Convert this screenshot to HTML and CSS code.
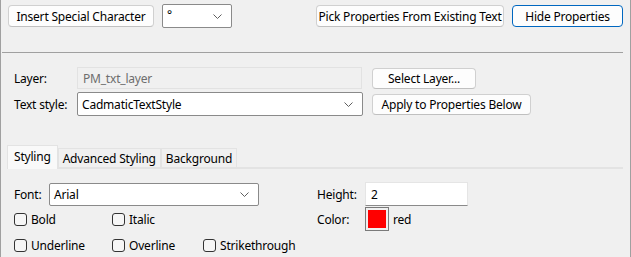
FILE: index.html
```html
<!DOCTYPE html>
<html lang="en">
<head>
    <meta charset="UTF-8">
    <title>Text Properties</title>
    <link rel="stylesheet" href="styles.css">
</head>
<body>
    <div class="window">
        <!-- Top toolbar -->
        <div class="toolbar">
            <button class="btn btn-insert">Insert Special Character</button>
            <div class="combo combo-char">
                <span class="combo-text">°</span>
                <svg class="chevron" width="9" height="5" viewBox="0 0 9 5"><path d="M0.5 0.5 L4.5 4.5 L8.5 0.5" fill="none" stroke="#5f5f5f" stroke-width="1"/></svg>
            </div>
            <div class="spacer"></div>
            <button class="btn btn-pick">Pick Properties From Existing Text</button>
            <button class="btn btn-hide">Hide Properties</button>
        </div>

        <div class="separator"></div>

        <!-- Layer and style -->
        <div class="layer-section">
            <div class="row">
                <div class="label">Layer:</div>
                <div class="textbox disabled layer-box">PM_txt_layer</div>
                <button class="btn btn-layer">Select Layer...</button>
            </div>
            <div class="row">
                <div class="label">Text style:</div>
                <div class="combo combo-style">
                    <span class="combo-text">CadmaticTextStyle</span>
                    <svg class="chevron" width="9" height="5" viewBox="0 0 9 5"><path d="M0.5 0.5 L4.5 4.5 L8.5 0.5" fill="none" stroke="#5f5f5f" stroke-width="1"/></svg>
                </div>
                <button class="btn btn-apply">Apply to Properties Below</button>
            </div>
        </div>

        <!-- Tabs -->
        <div class="tabs">
            <div class="tab active">Styling</div>
            <div class="tab">Advanced Styling</div>
            <div class="tab">Background</div>
        </div>

        <div class="panel">
            <div class="panel-left">
                <div class="font-row">
                    <div class="label font-label">Font:</div>
                    <div class="combo combo-font">
                        <span class="combo-text">Arial</span>
                        <svg class="chevron" width="9" height="5" viewBox="0 0 9 5"><path d="M0.5 0.5 L4.5 4.5 L8.5 0.5" fill="none" stroke="#5f5f5f" stroke-width="1"/></svg>
                    </div>
                </div>
                <div class="check-row">
                    <label class="check col-1"><span class="box"></span>Bold</label>
                    <label class="check col-2"><span class="box"></span>Italic</label>
                </div>
                <div class="check-row">
                    <label class="check col-1"><span class="box"></span>Underline</label>
                    <label class="check col-2"><span class="box"></span>Overline</label>
                    <label class="check col-3"><span class="box"></span>Strikethrough</label>
                </div>
            </div>
            <div class="panel-right">
                <div class="height-row">
                    <div class="label right-label">Height:</div>
                    <div class="textbox height-box">2</div>
                </div>
                <div class="color-row">
                    <div class="label right-label">Color:</div>
                    <div class="swatch"><span class="swatch-fill"></span></div>
                    <div class="color-name">red</div>
                </div>
            </div>
        </div>
    </div>
</body>
</html>
```

FILE: styles.css
```css
body {
    margin: 0;
    padding: 0;
    background-color: #f0f0f0;
    font-family: "Noto Sans", "Open Sans", sans-serif;
    font-size: 12px;
    letter-spacing: -0.2px;
    color: #000;
    overflow: hidden;
}

.window {
    height: 257px;
    border-left: 1px solid #a0a0a0;
    border-right: 1px solid #a0a0a0;
    box-sizing: border-box;
}

/* Top toolbar */
.toolbar {
    display: flex;
    align-items: center;
    padding: 4px 7px 0 7px;
    height: 24px;
}

.spacer {
    flex: 1;
}

.btn {
    font-family: inherit;
    font-size: 12px;
    letter-spacing: -0.2px;
    color: #000;
    background-color: #fdfdfd;
    border: 1px solid #d0d0d0;
    border-bottom-color: #c0c0c0;
    border-radius: 4px;
    height: 22px;
    padding: 0;
    box-sizing: border-box;
    display: flex;
    align-items: center;
    justify-content: center;
    white-space: nowrap;
}

.btn-insert {
    width: 146px;
}

.btn-pick {
    width: 188px;
}

.btn-hide {
    width: 111px;
    margin-left: 8px;
    border: 1px solid #0067c0;
}

.combo {
    position: relative;
    background-color: #fff;
    border: 1px solid #8a8a8a;
    border-radius: 2px;
    height: 24px;
    box-sizing: border-box;
    display: flex;
    align-items: center;
    padding-left: 4px;
}

.combo .chevron {
    position: absolute;
    right: 9px;
    top: 9px;
}

.combo-char {
    width: 70px;
    margin-left: 8px;
    align-items: flex-start;
    padding-top: 1px;
}

.separator {
    height: 1px;
    background-color: #a0a0a0;
    margin: 24px 7px 0 1px;
}

/* Layer / style section */
.layer-section {
    padding: 14px 0 0 13px;
}

.row {
    display: flex;
    align-items: center;
    height: 24px;
    margin-bottom: 1px;
}

.row:first-child {
    height: 22px;
    margin-bottom: 3px;
}

.label {
    white-space: nowrap;
}

.row .label {
    width: 63px;
}

.textbox {
    height: 22px;
    box-sizing: border-box;
    display: flex;
    align-items: center;
    padding-left: 5px;
    background-color: #fff;
    border: 1px solid #e5e5e5;
    border-bottom-color: #8a8a8a;
}

.textbox.disabled {
    background-color: #f0f0f0;
    border: 1px solid #e2e2e2;
    color: #6d6d6d;
}

.layer-box {
    width: 285px;
}

.btn-layer {
    width: 104px;
    margin-left: 10px;
    height: 21px;
}

.combo-style {
    width: 286px;
}

.btn-apply {
    width: 159px;
    margin-left: 9px;
    height: 21px;
}

/* Tabs */
.tabs {
    display: flex;
    align-items: flex-end;
    margin: 29px 7px 0 6px;
    height: 22px;
    border-bottom: 2px solid #e3e3e3;
}

.tab {
    height: 19px;
    padding: 0 4px;
    display: flex;
    align-items: center;
    background-color: #f0f0f0;
    border: 1px solid #e3e3e3;
    border-bottom: none;
    box-sizing: border-box;
    white-space: nowrap;
}

.tab.active {
    background-color: #f9f9f9;
    align-items: flex-start;
    padding: 2px 6px 0 6px;
    margin-bottom: -2px;
    height: 24px;
}

/* Styling panel */
.panel {
    display: flex;
    padding: 13px 0 0 13px;
}

.panel-left {
    width: 302px;
}

.font-row {
    display: flex;
    align-items: center;
    height: 24px;
}

.font-label {
    width: 35px;
}

.combo-font {
    width: 210px;
    height: 23px;
}

.combo-font .chevron {
    top: 8px;
}

.check-row {
    display: flex;
    align-items: center;
    height: 26px;
}

.check {
    display: flex;
    align-items: center;
}

.check .box {
    width: 11px;
    height: 11px;
    border: 1px solid #333;
    border-radius: 3px;
    background-color: #f6f6f6;
    margin-right: 4px;
}

.col-1 {
    width: 98px;
}

.col-2 {
    width: 91px;
}

.panel-right {
    padding-left: 1px;
}

.height-row {
    display: flex;
    align-items: center;
    height: 24px;
}

.right-label {
    width: 48px;
}

.height-box {
    width: 103px;
    height: 24px;
}

.color-row {
    display: flex;
    align-items: center;
    height: 26px;
}

.swatch {
    width: 24px;
    height: 24px;
    box-sizing: border-box;
    border: 1px solid #7a7a7a;
    padding: 2px;
}

.swatch-fill {
    display: block;
    width: 100%;
    height: 100%;
    background-color: #ff0000;
}

.color-name {
    margin-left: 4px;
}
```
